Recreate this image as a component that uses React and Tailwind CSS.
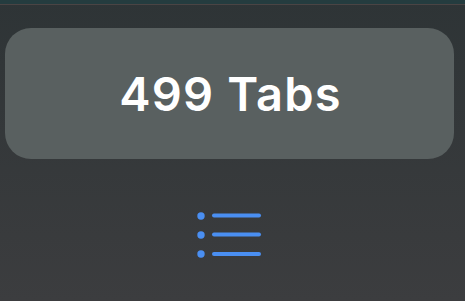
export default function App() {
  return (
    <div className="w-[465px] h-[301px] overflow-hidden flex flex-col bg-gradient-to-b from-[#2e3436] to-[#3c3d3f] font-['Inter','Liberation_Sans',sans-serif]">
      <div className="h-[4px] bg-[#243c3f]" />
      <div className="h-px bg-[#4a4444]" />
      <div className="px-[5px] pt-[23px] pr-[11px]">
        <div className="h-[131px] rounded-[26px] bg-[#596060] flex items-center justify-center">
          <span className="text-white text-[47px] font-semibold tracking-[1.2px] leading-none pl-[2px]">499 Tabs</span>
        </div>
      </div>
      <div className="flex justify-center pt-[53px] pr-[5px]">
        <svg width="68" height="46" viewBox="0 0 68 46">
          <g fill="#4a8ff2">
            <circle cx="5" cy="4" r="3.7" />
            <circle cx="5" cy="23" r="3.7" />
            <circle cx="5" cy="42" r="3.7" />
          </g>
          <g stroke="#4a8ff2" strokeWidth="4" strokeLinecap="round">
            <line x1="18" y1="3.5" x2="63" y2="3.5" />
            <line x1="18" y1="22.5" x2="63" y2="22.5" />
            <line x1="18" y1="42" x2="63" y2="42" />
          </g>
        </svg>
      </div>
    </div>
  );
}
